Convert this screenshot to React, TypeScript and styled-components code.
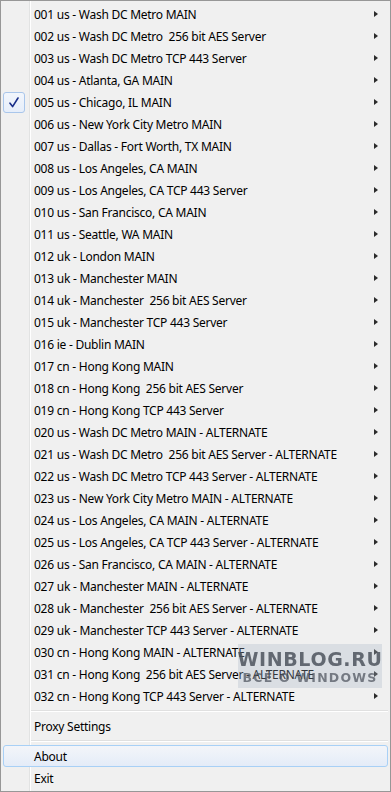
import React from "react";
import styled, { createGlobalStyle } from "styled-components";

const Global = createGlobalStyle`
  html, body { margin: 0; padding: 0; background: #f0f0f0; }
  body { font-family: "Noto Sans", "Open Sans", sans-serif; }
`;

const Menu = styled.div`
  position: relative;
  box-sizing: border-box;
  width: 391px;
  height: 792px;
  border: 1px solid #979797;
  padding: 2px;
  display: flex;
  flex-direction: column;
  background: linear-gradient(
    to right,
    #f0f0f0 0 28px,
    #e2e3e3 28px 29px,
    #ffffff 29px 30px,
    #f0f0f0 30px
  );
  font-family: "Noto Sans", "Open Sans", sans-serif;
  font-size: 12px;
  color: #000;
`;

const Item = styled.div<{ $hover?: boolean }>`
  box-sizing: border-box;
  height: 22px;
  display: flex;
  align-items: center;
  padding-right: 9px;
  border: 1px solid ${(p) => (p.$hover ? "#a8d0f6" : "transparent")};
  border-radius: 3px;
  background: ${(p) =>
    p.$hover ? "linear-gradient(to bottom, #f3f5f9, #e4ecf8)" : "transparent"};
`;

const IconSlot = styled.div<{ $checked?: boolean }>`
  box-sizing: border-box;
  width: 22px;
  height: 21px;
  margin-left: -1px;
  flex: none;
  display: flex;
  align-items: center;
  justify-content: center;
  border: 1px solid ${(p) => (p.$checked ? "#a9c6eb" : "transparent")};
  border-radius: 3px;
  background: ${(p) =>
    p.$checked ? "linear-gradient(to bottom, #f2f6fc, #e6eefa)" : "transparent"};
`;

const Label = styled.span`
  flex: 1;
  margin-left: 9px;
  white-space: pre;
  letter-spacing: -0.25px;
`;

const Arrow = styled.span`
  width: 0;
  height: 0;
  border-top: 3.5px solid transparent;
  border-bottom: 3.5px solid transparent;
  border-left: 4px solid #2b2b2b;
`;

const Separator = styled.div`
  height: 8px;
  display: flex;
  align-items: center;
  padding-left: 28px;
  &::after {
    content: "";
    flex: 1;
    height: 1px;
    background: #e0e0e0;
    border-bottom: 1px solid #ffffff;
  }
`;

const Watermark = styled.div`
  position: absolute;
  left: 237px;
  top: 643px;
  width: 144px;
  height: 44px;
  background: rgba(170, 182, 198, 0.3);
  display: flex;
  flex-direction: column;
  align-items: center;
  justify-content: center;
  pointer-events: none;
  font-family: "DejaVu Sans", "Noto Sans", sans-serif;
  font-weight: bold;
  color: rgba(72, 78, 88, 0.82);
  filter: blur(0.7px);
`;

const WmBig = styled.div`
  font-size: 19px;
  line-height: 22px;
  letter-spacing: 0.6px;
`;

const WmSmall = styled.div`
  font-size: 12.5px;
  line-height: 15px;
  letter-spacing: 1.2px;
  color: rgba(72, 78, 88, 0.7);
`;

const servers = [
  "001 us - Wash DC Metro MAIN",
  "002 us - Wash DC Metro  256 bit AES Server",
  "003 us - Wash DC Metro TCP 443 Server",
  "004 us - Atlanta, GA MAIN",
  "005 us - Chicago, IL MAIN",
  "006 us - New York City Metro MAIN",
  "007 us - Dallas - Fort Worth, TX MAIN",
  "008 us - Los Angeles, CA MAIN",
  "009 us - Los Angeles, CA TCP 443 Server",
  "010 us - San Francisco, CA MAIN",
  "011 us - Seattle, WA MAIN",
  "012 uk - London MAIN",
  "013 uk - Manchester MAIN",
  "014 uk - Manchester  256 bit AES Server",
  "015 uk - Manchester TCP 443 Server",
  "016 ie - Dublin MAIN",
  "017 cn - Hong Kong MAIN",
  "018 cn - Hong Kong  256 bit AES Server",
  "019 cn - Hong Kong TCP 443 Server",
  "020 us - Wash DC Metro MAIN - ALTERNATE",
  "021 us - Wash DC Metro  256 bit AES Server - ALTERNATE",
  "022 us - Wash DC Metro TCP 443 Server - ALTERNATE",
  "023 us - New York City Metro MAIN - ALTERNATE",
  "024 us - Los Angeles, CA MAIN - ALTERNATE",
  "025 us - Los Angeles, CA TCP 443 Server - ALTERNATE",
  "026 us - San Francisco, CA MAIN - ALTERNATE",
  "027 uk - Manchester MAIN - ALTERNATE",
  "028 uk - Manchester  256 bit AES Server - ALTERNATE",
  "029 uk - Manchester TCP 443 Server - ALTERNATE",
  "030 cn - Hong Kong MAIN - ALTERNATE",
  "031 cn - Hong Kong  256 bit AES Server - ALTERNATE",
  "032 cn - Hong Kong TCP 443 Server - ALTERNATE",
];

const CheckIcon = () => (
  <svg width="10" height="11" viewBox="0 0 10 11">
    <path
      d="M1 6.2 L3.6 9.6 L9 1"
      fill="none"
      stroke="#1a2f8a"
      strokeWidth="1.6"
      strokeLinecap="round"
      strokeLinejoin="round"
    />
  </svg>
);

export default function App() {
  return (
    <>
      <Global />
      <Menu>
        {servers.map((s, i) => (
          <Item key={s}>
            <IconSlot $checked={i === 4}>{i === 4 && <CheckIcon />}</IconSlot>
            <Label>{s}</Label>
            <Arrow />
          </Item>
        ))}
        <Separator />
        <Item>
          <IconSlot />
          <Label>Proxy Settings</Label>
        </Item>
        <Separator />
        <Item $hover>
          <IconSlot />
          <Label>About</Label>
        </Item>
        <Item>
          <IconSlot />
          <Label>Exit</Label>
        </Item>
        <Watermark>
          <WmBig>WINBLOG.RU</WmBig>
          <WmSmall>ВСЁ О WINDOWS</WmSmall>
        </Watermark>
      </Menu>
    </>
  );
}
